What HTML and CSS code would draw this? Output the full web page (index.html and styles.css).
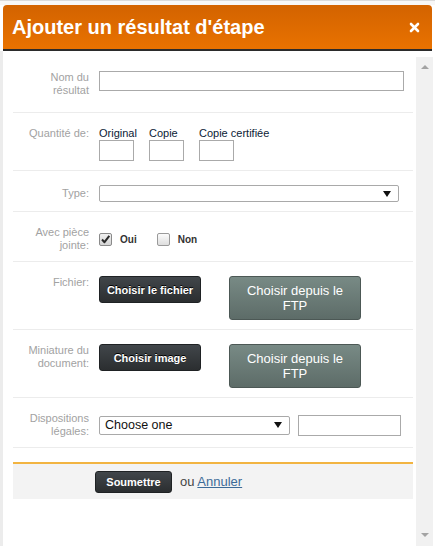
FILE: index.html
```html
<!DOCTYPE html>
<html lang="fr">
<head>
<meta charset="utf-8">
<title>Ajouter un résultat d'étape</title>
<link rel="stylesheet" href="styles.css">
</head>
<body>
<div class="page">
  <div class="top"></div>
  <header class="titlebar">
    <h1 class="title">Ajouter un résultat d'étape</h1>
    <svg class="close" width="11" height="11" viewBox="0 0 11 11" aria-label="Fermer">
      <path d="M2 2 L9 9 M9 2 L2 9" stroke="#fff" stroke-width="2.6" stroke-linecap="round"/>
    </svg>
  </header>
  <div class="main">
    <form class="content">
      <div class="row row-first">
        <label class="lbl">Nom du<br>résultat</label>
        <div class="ctl"><span class="input input-name"></span></div>
      </div>

      <div class="row">
        <label class="lbl lbl-qty">Quantité de:</label>
        <div class="ctl qty">
          <div class="qcol"><span class="qcap">Original</span><span class="input qbox"></span></div>
          <div class="qcol"><span class="qcap">Copie</span><span class="input qbox"></span></div>
          <div class="qcol"><span class="qcap">Copie certifiée</span><span class="input qbox"></span></div>
        </div>
      </div>

      <div class="row">
        <label class="lbl lbl-one">Type:</label>
        <div class="ctl"><span class="select select-type"><span class="arrow"></span></span></div>
      </div>

      <div class="row">
        <label class="lbl">Avec pièce<br>jointe:</label>
        <div class="ctl checks">
          <span class="cb cb-on">
            <svg width="11" height="11" viewBox="0 0 11 11"><path d="M2 5.5 L4.5 8.2 L9.3 1.8" fill="none" stroke="#2a2a2a" stroke-width="2" stroke-linejoin="round"/></svg>
          </span>
          <span class="cbtext">Oui</span>
          <span class="cb"></span>
          <span class="cbtext">Non</span>
        </div>
      </div>

      <div class="row">
        <label class="lbl">Fichier:</label>
        <div class="ctl btns">
          <button type="button" class="btn-dark">Choisir le fichier</button>
          <button type="button" class="btn-ftp">Choisir depuis le<br>FTP</button>
        </div>
      </div>

      <div class="row">
        <label class="lbl">Miniature du<br>document:</label>
        <div class="ctl btns">
          <button type="button" class="btn-dark">Choisir image</button>
          <button type="button" class="btn-ftp">Choisir depuis le<br>FTP</button>
        </div>
      </div>

      <div class="row">
        <label class="lbl">Dispositions<br>légales:</label>
        <div class="ctl disp">
          <span class="select select-disp"><span class="seltext">Choose one</span><span class="arrow"></span></span>
          <span class="input input-disp"></span>
        </div>
      </div>

      <div class="footer">
        <button type="button" class="btn-submit">Soumettre</button>
        <span class="ou">ou <a class="cancel" href="#">Annuler</a></span>
      </div>
    </form>
    <div class="scroll">
      <span class="sarrow sarrow-up"></span>
      <span class="sarrow sarrow-down"></span>
    </div>
  </div>
</div>
</body>
</html>
```

FILE: styles.css
```css
* { box-sizing: border-box; }
html, body { margin: 0; padding: 0; }
body {
  width: 435px;
  height: 546px;
  overflow: hidden;
  background: #fff;
  font-family: "Liberation Sans", Arial, sans-serif;
}
.page { display: flex; flex-direction: column; height: 546px; }
.top { height: 5px; border-top: 1px solid #dadada; background: #f7f7f7; }

.titlebar {
  margin: 0 3px;
  height: 46px;
  border-bottom: 2px solid #2b2b2b;
  border-radius: 4px 4px 0 0;
  background: linear-gradient(#d36300, #e97200);
  display: flex;
  align-items: center;
  justify-content: space-between;
  padding: 0 12px 0 9px;
}
.title {
  margin: 0;
  color: #fff;
  font: bold 20px/23px "Liberation Sans", Arial, sans-serif;
}
.close { display: block; }

.main { flex: 1; display: flex; border-left: 3px solid #ececec; }
.content { width: 413px; padding: 6px 3px 0 10px; margin: 0; }

.row {
  display: grid;
  grid-template-columns: 76px 1fr;
  column-gap: 10px;
  padding: 14px 0 9px;
  border-bottom: 1px solid #ececec;
}
.row-first { padding-bottom: 15px; }
.lbl {
  font-size: 11px;
  line-height: 13px;
  color: #a2a2a2;
  text-align: right;
}
.lbl-one { line-height: 17px; }
.ctl { display: flex; }

.input { display: block; border: 1px solid #aaa; background: #fff; }
.input-name { width: 305px; height: 20px; }

.qty { align-items: flex-start; }
.qcol { display: flex; flex-direction: column; width: 50px; }
.qcap {
  font-size: 11px;
  line-height: 13px;
  color: #0b1b36;
  white-space: nowrap;
}
.qbox { width: 35px; height: 21px; }

.select {
  display: flex;
  align-items: center;
  justify-content: space-between;
  border: 1px solid #a9a9a9;
  border-radius: 2px;
  background: #fff;
  padding: 0 7px 0 5px;
}
.select-type { width: 300px; height: 17px; justify-content: flex-end; }
.arrow {
  width: 0;
  height: 0;
  border-left: 4px solid transparent;
  border-right: 4px solid transparent;
  border-top: 6px solid #111;
}

.checks { align-items: center; height: 26px; }
.cb {
  display: flex;
  align-items: center;
  justify-content: center;
  width: 13px;
  height: 13px;
  border: 1px solid #9a9a9a;
  border-radius: 2px;
  background: linear-gradient(#fbfbfb, #dedede);
}
.cb-on { background: linear-gradient(#f0f0f0, #d4d4d4); border-color: #8a8a8a; }
.cbtext {
  font-size: 10px;
  font-weight: bold;
  color: #333;
  margin: 0 20px 0 8px;
}

.btns { align-items: flex-start; }
.btn-dark {
  width: 102px;
  height: 27px;
  padding: 0;
  border: 1px solid #1f2224;
  border-radius: 3px;
  background: linear-gradient(#41464a, #2b2e30);
  color: #fff;
  font: bold 11px "Liberation Sans", Arial, sans-serif;
  text-shadow: 0 -1px 0 #000;
}
.btn-ftp {
  width: 132px;
  height: 44px;
  margin-left: 28px;
  padding: 0;
  border: 1px solid #4c5855;
  border-radius: 3px;
  background: linear-gradient(#788a85, #5d6c68);
  color: #fff;
  font: 13px/15px "Liberation Sans", Arial, sans-serif;
}

.disp { align-items: center; height: 26px; }
.select-disp { width: 191px; height: 19px; }
.seltext { font-size: 12.5px; color: #111; }
.input-disp { width: 103px; height: 21px; margin-left: 8px; }

.footer {
  margin-top: 14px;
  height: 37px;
  border-top: 2px solid #f2b441;
  background: #f3f3f3;
  display: flex;
  align-items: center;
  padding-left: 82px;
}
.btn-submit {
  width: 77px;
  height: 22px;
  padding: 0;
  border: 1px solid #1f2224;
  border-radius: 3px;
  background: linear-gradient(#41464a, #2b2e30);
  color: #fff;
  font: bold 11px "Liberation Sans", Arial, sans-serif;
}
.ou { margin-left: 8px; font-size: 13px; color: #444; }
.cancel { color: #3d6b98; text-decoration: underline; }

.scroll {
  width: 17px;
  margin-top: 6px;
  background: #f1f1f1;
  display: flex;
  flex-direction: column;
  justify-content: space-between;
  align-items: center;
  padding: 8px 0 9px;
}
.sarrow { width: 0; height: 0; border-left: 4px solid transparent; border-right: 4px solid transparent; }
.sarrow-up { border-bottom: 4px solid #a3a3a3; }
.sarrow-down { border-top: 4px solid #a3a3a3; }
```
